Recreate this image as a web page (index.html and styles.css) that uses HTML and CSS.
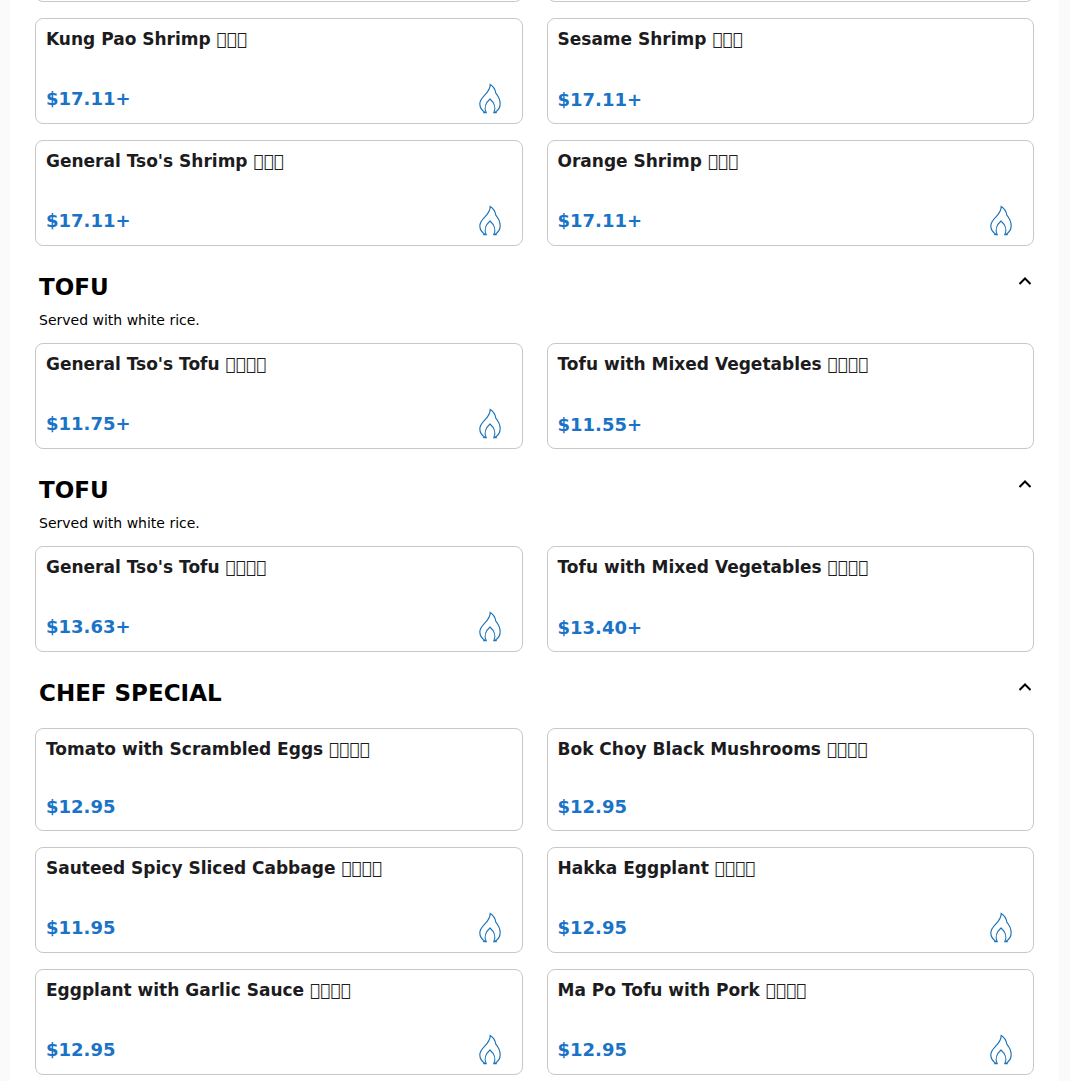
FILE: index.html
```html
<!DOCTYPE html>
<html lang="en">
<head>
  <meta charset="utf-8">
  <meta name="viewport" content="width=device-width, initial-scale=1">
  <title>Menu</title>
  <link rel="stylesheet" href="styles.css">
</head>
<body>
  <!-- Shared icons -->
  <svg class="icon-defs" aria-hidden="true">
    <symbol id="flame" viewBox="0 0 24 32">
      <path d="M7 30.500C3.500 28.500 1.500 25 1.500 21.500C1.500 13.500 12.500 11 12.200 1.500C15.500 3.500 17.500 7 18 10.500C20.500 13.500 22.500 17 22.500 21.500C22.500 25 20.500 28.500 17 30.500"/>
      <path d="M5 30.500H8C5.500 25.500 8 20 12 16.500C16 20 18.500 25.500 16 30.500H19"/>
    </symbol>
    <symbol id="chevron" viewBox="0 0 16 16">
      <path d="M2.500 11L8 5.500L13.500 11"/>
    </symbol>
  </svg>

  <main class="menu">
    <div class="items items-cut">
      <div class="card"></div>
      <div class="card"></div>
    </div>

    <div class="items">
      <article class="card">
        <h3 class="name">Kung Pao Shrimp &#xE101;&#xE101;&#xE101;</h3>
        <div class="card-footer"><span class="price">$17.11+</span><svg class="flame"><use href="#flame"/></svg></div>
      </article>
      <article class="card">
        <h3 class="name">Sesame Shrimp &#xE101;&#xE101;&#xE101;</h3>
        <div class="card-footer"><span class="price">$17.11+</span></div>
      </article>
      <article class="card">
        <h3 class="name">General Tso's Shrimp &#xE101;&#xE101;&#xE101;</h3>
        <div class="card-footer"><span class="price">$17.11+</span><svg class="flame"><use href="#flame"/></svg></div>
      </article>
      <article class="card">
        <h3 class="name">Orange Shrimp &#xE101;&#xE101;&#xE101;</h3>
        <div class="card-footer"><span class="price">$17.11+</span><svg class="flame"><use href="#flame"/></svg></div>
      </article>
    </div>

    <section>
      <header class="section-header">
        <div>
          <h2 class="section-title">TOFU</h2>
          <p class="section-note">Served with white rice.</p>
        </div>
        <button class="toggle" type="button" aria-label="Collapse Tofu"><svg class="chevron"><use href="#chevron"/></svg></button>
      </header>
      <div class="items">
        <article class="card">
          <h3 class="name">General Tso's Tofu &#xE101;&#xE101;&#xE101;&#xE101;</h3>
          <div class="card-footer"><span class="price">$11.75+</span><svg class="flame"><use href="#flame"/></svg></div>
        </article>
        <article class="card">
          <h3 class="name">Tofu with Mixed Vegetables &#xE101;&#xE101;&#xE101;&#xE101;</h3>
          <div class="card-footer"><span class="price">$11.55+</span></div>
        </article>
      </div>
    </section>

    <section>
      <header class="section-header">
        <div>
          <h2 class="section-title">TOFU</h2>
          <p class="section-note">Served with white rice.</p>
        </div>
        <button class="toggle" type="button" aria-label="Collapse Tofu"><svg class="chevron"><use href="#chevron"/></svg></button>
      </header>
      <div class="items">
        <article class="card">
          <h3 class="name">General Tso's Tofu &#xE101;&#xE101;&#xE101;&#xE101;</h3>
          <div class="card-footer"><span class="price">$13.63+</span><svg class="flame"><use href="#flame"/></svg></div>
        </article>
        <article class="card">
          <h3 class="name">Tofu with Mixed Vegetables &#xE101;&#xE101;&#xE101;&#xE101;</h3>
          <div class="card-footer"><span class="price">$13.40+</span></div>
        </article>
      </div>
    </section>

    <section>
      <header class="section-header no-note">
        <h2 class="section-title">CHEF SPECIAL</h2>
        <button class="toggle" type="button" aria-label="Collapse Chef Special"><svg class="chevron"><use href="#chevron"/></svg></button>
      </header>
      <div class="items">
        <article class="card">
          <h3 class="name">Tomato with Scrambled Eggs &#xE101;&#xE101;&#xE101;&#xE101;</h3>
          <div class="card-footer"><span class="price">$12.95</span></div>
        </article>
        <article class="card">
          <h3 class="name">Bok Choy Black Mushrooms &#xE101;&#xE101;&#xE101;&#xE101;</h3>
          <div class="card-footer"><span class="price">$12.95</span></div>
        </article>
        <article class="card">
          <h3 class="name">Sauteed Spicy Sliced Cabbage &#xE101;&#xE101;&#xE101;&#xE101;</h3>
          <div class="card-footer"><span class="price">$11.95</span><svg class="flame"><use href="#flame"/></svg></div>
        </article>
        <article class="card">
          <h3 class="name">Hakka Eggplant &#xE101;&#xE101;&#xE101;&#xE101;</h3>
          <div class="card-footer"><span class="price">$12.95</span><svg class="flame"><use href="#flame"/></svg></div>
        </article>
        <article class="card">
          <h3 class="name">Eggplant with Garlic Sauce &#xE101;&#xE101;&#xE101;&#xE101;</h3>
          <div class="card-footer"><span class="price">$12.95</span><svg class="flame"><use href="#flame"/></svg></div>
        </article>
        <article class="card">
          <h3 class="name">Ma Po Tofu with Pork &#xE101;&#xE101;&#xE101;&#xE101;</h3>
          <div class="card-footer"><span class="price">$12.95</span><svg class="flame"><use href="#flame"/></svg></div>
        </article>
      </div>
    </section>
  </main>
</body>
</html>
```

FILE: styles.css
```css
* {
  box-sizing: border-box;
}

body {
  margin: 0;
  padding: 0 11px 0 10px;
  background-color: #fafafa;
  font-family: "DejaVu Sans", sans-serif;
  color: #000;
}

h2, h3, p {
  margin: 0;
}

.icon-defs {
  display: none;
}

.menu {
  min-height: 100vh;
  padding: 0 25px 6px;
  background-color: #fff;
}

/* Menu items */
.items {
  display: grid;
  grid-template-columns: 1fr 1fr;
  gap: 16px 24px;
}

/* Tail of the row scrolled off the top */
.items-cut {
  height: 2px;
  margin-bottom: 16px;
  align-content: end;
  overflow: hidden;
}

.items-cut .card {
  height: 40px;
}

.card {
  display: flex;
  flex-direction: column;
  justify-content: space-between;
  padding: 8px 20px 9px 10px;
  border: 1px solid #c8c8c8;
  border-radius: 8px;
}

.name {
  margin-bottom: 32px;
  font-size: 17px;
  line-height: 24px;
  color: #1c1b20;
}

.card-footer {
  display: flex;
  align-items: center;
  justify-content: space-between;
}

.price {
  font-size: 18px;
  font-weight: bold;
  line-height: 28px;
  color: #1a73c7;
}

.flame {
  width: 24px;
  height: 31px;
  fill: none;
  stroke: #1a73b8;
  stroke-width: 1.2;
}

/* Section headings */
.section-header {
  display: flex;
  align-items: flex-start;
  justify-content: space-between;
  padding: 24px 0 13px 4px;
}

.section-header.no-note {
  padding-bottom: 18px;
}

.section-title {
  font-size: 23px;
  line-height: 34px;
}

.section-note {
  margin-top: 6px;
  font-size: 14px;
  line-height: 20px;
}

.toggle {
  display: flex;
  padding: 3px 1px;
  border: none;
  background: none;
  cursor: pointer;
}

.chevron {
  width: 16px;
  height: 16px;
  fill: none;
  stroke: #000;
  stroke-width: 2;
}
```
